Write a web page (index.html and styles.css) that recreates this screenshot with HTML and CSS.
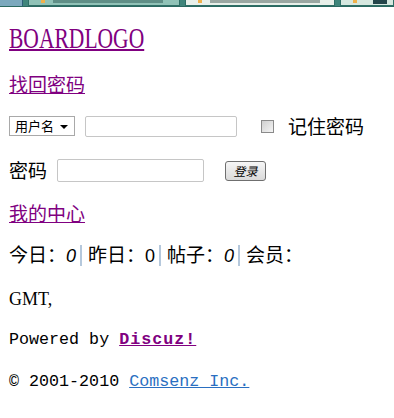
FILE: index.html
```html
<!DOCTYPE html>
<html lang="zh-CN">
<head>
<meta charset="utf-8">
<title>BOARDLOGO</title>
<link rel="stylesheet" href="styles.css">
</head>
<body>
<div class="tabs">
  <span class="tab-btn"></span>
  <span class="tab tab-a"><i class="tab-ico"></i><span class="tab-txt"></span></span>
  <span class="tab tab-active"><i class="tab-ico"></i><span class="tab-txt dark"></span></span>
  <span class="tab tab-b"><i class="tab-ico"></i><span class="tab-sq"></span></span>
</div>
<div class="page">
  <h1 class="logo"><a href="#" class="v logo-link">BOARDLOGO</a></h1>
  <p class="line first"><a href="#" class="v">找回密码</a></p>
  <form class="login">
    <div class="row row1">
      <span class="select-wrap">
        <select class="sel"><option>用户名</option></select>
      </span>
      <input class="txt txt-user" type="text">
      <input class="chk" type="checkbox">
      <span class="lbl">记住密码</span>
    </div>
    <div class="row row2">
      <span class="lbl">密码</span>
      <input class="txt txt-pass" type="password">
      <button type="button" class="btn">登录</button>
    </div>
  </form>
  <p class="line center"><a href="#" class="v">我的中心</a></p>
  <p class="line stats">今日：<em class="num">0</em><span class="sep"></span>昨日：<span class="num">0</span><span class="sep"></span>帖子：<em class="num">0</em><span class="sep"></span>会员：</p>
  <p class="mono gmt">GMT,</p>
  <p class="mono powered">Powered by <b><a href="#" class="v">Discuz!</a></b></p>
  <p class="mono copy">© 2001-2010 <a href="#" class="blue">Comsenz Inc.</a></p>
</div>
</body>
</html>
```
FILE: styles.css
```css
html, body {
  margin: 0;
  padding: 0;
  background: #fff;
}
body {
  font-family: "Noto Sans CJK SC", "Liberation Sans", sans-serif;
  font-size: 19px;
  color: #000;
}

/* browser tab strip fragment */
.tabs {
  display: flex;
  height: 6px;
  background: #3f857b;
  border-bottom: 1px solid #2a6860;
  overflow: hidden;
}
.tab-btn {
  width: 22px;
  background: #7ba8bd;
  border-right: 1px solid #2c5f78;
}
.tab {
  display: flex;
  align-items: flex-start;
  margin-left: 5px;
  background: #90c2b7;
  border: 1px solid #2f6f66;
  border-top: 0;
}
.tab-a { width: 150px; }
.tab-active { width: 148px; background: #e8f0ea; }
.tab-b { flex: 1; margin-right: 0; background: #d6e8e0; }
.tab-ico {
  display: block;
  width: 4px;
  height: 3px;
  margin: 0 8px 0 12px;
  background: #f0b14a;
}
.tab-txt {
  display: block;
  width: 110px;
  height: 3px;
  background: #5f8e86;
}
.tab-txt.dark { background: #9aa7a2; }
.tab-sq {
  display: block;
  width: 14px;
  height: 4px;
  margin-left: 8px;
  background: #23454a;
}

.page {
  padding: 0 9px;
}

a.v { color: #800080; }
a.blue { color: #2a6fc1; }

.logo {
  margin: 14px 0 0;
  height: 34px;
  font-family: "Liberation Serif", serif;
  font-weight: normal;
  font-size: 30px;
  line-height: 34px;
}
.logo-link {
  display: inline-block;
  transform: scaleX(0.718);
  transform-origin: left center;
  text-decoration-thickness: 2px;
}

.line {
  margin: 0;
  height: 22px;
  line-height: 22px;
  white-space: nowrap;
}
.line.first { margin-top: 18px; }

.login { margin: 0; }
.row {
  display: flex;
  align-items: center;
}
.row1 { margin-top: 20px; height: 22px; }
.row2 { margin-top: 21px; height: 24px; }

.select-wrap {
  position: relative;
  display: block;
  width: 66px;
  height: 20px;
}
.sel {
  display: block;
  appearance: none;
  -webkit-appearance: none;
  box-sizing: border-box;
  width: 66px;
  height: 20px;
  margin: 0;
  padding: 0 0 0 5px;
  border: 1px solid #a9a9a9;
  border-radius: 0;
  background: #fff;
  font-family: "Noto Sans CJK SC", sans-serif;
  font-size: 13px;
  line-height: 18px;
  color: #000;
}
.select-wrap::after {
  content: "";
  position: absolute;
  right: 7px;
  top: 9px;
  border-left: 4px solid transparent;
  border-right: 4px solid transparent;
  border-top: 4px solid #000;
  pointer-events: none;
}

.txt {
  box-sizing: border-box;
  margin: 0;
  padding: 0 3px;
  border: 1px solid #c6c6c6;
  border-radius: 2px;
  background: #fff;
  font-size: 14px;
}
.txt-user {
  width: 152px;
  height: 21px;
  margin-left: 10px;
}
.chk {
  appearance: none;
  -webkit-appearance: none;
  box-sizing: border-box;
  width: 13px;
  height: 13px;
  margin: 0 0 0 24px;
  border: 1px solid #8a8a8a;
  background: linear-gradient(135deg, #cfcfcf, #f4f4f4);
}
.row1 .lbl { margin-left: 14px; }
.lbl {
  font-size: 19px;
  line-height: 22px;
}
.txt-pass {
  width: 147px;
  height: 23px;
  margin-left: 10px;
}
.btn {
  box-sizing: border-box;
  width: 41px;
  height: 20px;
  margin: 2px 0 0 21px;
  padding: 0;
  border: 1px solid #6f6f6f;
  border-radius: 3px;
  background: linear-gradient(#f6f6f6, #dadada);
  font-family: "Noto Sans CJK SC", sans-serif;
  font-size: 12px;
  font-style: italic;
  line-height: 18px;
  color: #000;
}

.line.center { margin-top: 20px; }
.line.stats { margin-top: 19px; }
.num {
  font-family: "Liberation Sans", sans-serif;
  font-size: 18px;
}
.stats em.num { font-style: italic; }
.sep {
  display: inline-block;
  width: 2px;
  height: 21px;
  margin: 0 6px 0 4px;
  background: #b5c8dc;
  vertical-align: -4px;
}

.mono {
  margin: 0;
  height: 22px;
  line-height: 22px;
  font-family: "Liberation Mono", monospace;
  font-size: 16.7px;
  white-space: nowrap;
}
.mono b { letter-spacing: 1px; }
.gmt {
  margin-top: 23px;
  font-family: "Liberation Serif", serif;
  font-size: 18px;
}
.powered { margin-top: 19px; }
.copy { margin-top: 20px; }
```
